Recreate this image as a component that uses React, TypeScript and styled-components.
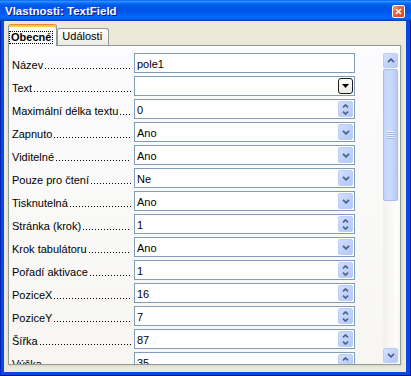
import React from "react";
import styled, { createGlobalStyle } from "styled-components";

type Control = "none" | "list" | "combo" | "spin";

interface Field {
  label: string;
  value: string;
  control: Control;
}

const fields: Field[] = [
  { label: "Název", value: "pole1", control: "none" },
  { label: "Text", value: "", control: "list" },
  { label: "Maximální délka textu", value: "0", control: "spin" },
  { label: "Zapnuto", value: "Ano", control: "combo" },
  { label: "Viditelné", value: "Ano", control: "combo" },
  { label: "Pouze pro čtení", value: "Ne", control: "combo" },
  { label: "Tisknutelná", value: "Ano", control: "combo" },
  { label: "Stránka (krok)", value: "1", control: "spin" },
  { label: "Krok tabulátoru", value: "Ano", control: "combo" },
  { label: "Pořadí aktivace", value: "1", control: "spin" },
  { label: "PoziceX", value: "16", control: "spin" },
  { label: "PoziceY", value: "7", control: "spin" },
  { label: "Šířka", value: "87", control: "spin" },
  { label: "Výška", value: "35", control: "spin" },
];

const GlobalStyle = createGlobalStyle`
  html, body {
    margin: 0;
    padding: 0;
    background: #ece9d8;
  }
  body {
    font-family: "Liberation Sans", Arial, sans-serif;
    font-size: 11px;
    color: #000;
  }
  * {
    box-sizing: border-box;
  }
`;

export default function App() {
  return (
    <>
      <GlobalStyle />
      <Frame>
        <TitleBar>
          <Title>Vlastnosti: TextField</Title>
          <CloseButton>
            <svg width="7" height="7" viewBox="0 0 7 7">
              <path d="M1 1L6 6M6 1L1 6" stroke="#fff" strokeWidth="1.6" />
            </svg>
          </CloseButton>
        </TitleBar>
        <Body>
          <TabStrip>
            <Tab $active>
              <FocusLabel>Obecné</FocusLabel>
            </Tab>
            <Tab>Události</Tab>
          </TabStrip>
          <Panel>
            <Form>
              {fields.map((f) => (
                <FieldRow key={f.label}>
                  <Label>
                    <LabelText>{f.label}</LabelText>
                    <Leader />
                  </Label>
                  <InputBox>
                    <Value>{f.value}</Value>
                    {f.control === "list" && (
                      <ListButton>
                        <svg width="7" height="4" viewBox="0 0 7 4">
                          <path d="M0 0H7L3.5 4Z" fill="#000" />
                        </svg>
                      </ListButton>
                    )}
                    {f.control === "combo" && (
                      <ComboButton>
                        <Chevron dir="down" />
                      </ComboButton>
                    )}
                    {f.control === "spin" && (
                      <SpinButton>
                        <SmallChevron dir="up" />
                        <SmallChevron dir="down" />
                      </SpinButton>
                    )}
                  </InputBox>
                </FieldRow>
              ))}
            </Form>
            <ScrollBar>
              <ScrollButton>
                <Chevron dir="up" />
              </ScrollButton>
              <Track>
                <Thumb>
                  <Grip />
                </Thumb>
              </Track>
              <ScrollButton>
                <Chevron dir="down" />
              </ScrollButton>
            </ScrollBar>
          </Panel>
        </Body>
      </Frame>
    </>
  );
}

function Chevron({ dir }: { dir: "up" | "down" }) {
  return (
    <svg width="8" height="5" viewBox="0 0 8 5">
      <path
        d={dir === "down" ? "M1 0.8L4 3.8L7 0.8" : "M1 4.2L4 1.2L7 4.2"}
        stroke="#4d6185"
        strokeWidth="1.8"
        fill="none"
      />
    </svg>
  );
}

function SmallChevron({ dir }: { dir: "up" | "down" }) {
  return (
    <svg width="7" height="4" viewBox="0 0 7 4">
      <path
        d={dir === "down" ? "M1 0.6L3.5 3.1L6 0.6" : "M1 3.4L3.5 0.9L6 3.4"}
        stroke="#4d6185"
        strokeWidth="1.6"
        fill="none"
      />
    </svg>
  );
}

const Frame = styled.div`
  width: 411px;
  height: 376px;
  display: flex;
  flex-direction: column;
  background: #0a48e0;
  box-shadow: inset 1px 0 #0026b8, inset -1px 0 #00169c, inset 0 -1px #00138c;
  overflow: hidden;
`;

const TitleBar = styled.div`
  height: 21px;
  flex: none;
  display: flex;
  align-items: center;
  padding: 0 6px 0 5px;
  background: linear-gradient(
    180deg,
    #0058ee 0%,
    #3593ff 6%,
    #127dff 12%,
    #0262ee 20%,
    #0057e5 28%,
    #0055eb 56%,
    #005bf5 66%,
    #026afe 78%,
    #0062ef 88%,
    #0052d6 94%,
    #0040ab 100%
  );
`;

const Title = styled.span`
  flex: 1;
  color: #fff;
  font-family: "Liberation Sans", Arial, sans-serif;
  font-weight: bold;
  font-size: 11.5px;
  padding-top: 1px;
  text-shadow: 1px 1px #0f1089;
`;

const CloseButton = styled.div`
  width: 13px;
  height: 13px;
  margin-top: 1px;
  border: 1px solid #fff;
  border-radius: 2px;
  display: flex;
  align-items: center;
  justify-content: center;
  background: linear-gradient(135deg, #f3ab8f 0%, #e6683f 35%, #d8471c 100%);
`;

const Body = styled.div`
  flex: 1;
  margin: 0 5px 4px 4px;
  padding: 3px 5px 7px 4px;
  background: #ece9d8;
  display: flex;
  flex-direction: column;
`;

const TabStrip = styled.div`
  height: 21px;
  flex: none;
  display: flex;
  align-items: flex-end;
`;

const Tab = styled.div<{ $active?: boolean }>`
  position: relative;
  z-index: ${(p) => (p.$active ? 1 : 0)};
  height: ${(p) => (p.$active ? 22 : 17)}px;
  margin-bottom: ${(p) => (p.$active ? -1 : 0)}px;
  padding: ${(p) => (p.$active ? "6px 3px 0 0" : "1px 6px 0 4px")};
  line-height: 13px;
  border: 1px solid #919b9c;
  border-bottom: none;
  border-radius: 3px 3px 0 0;
  background: ${(p) =>
    p.$active ? "#fcfcfe" : "linear-gradient(180deg, #fefefe, #ecebe6)"};
  border-top-color: ${(p) => (p.$active ? "#e68b2c" : "#919b9c")};
  box-shadow: ${(p) => (p.$active ? "inset 0 2px #ffc73c" : "none")};
`;

const FocusLabel = styled.span`
  display: block;
  height: 13px;
  padding: 0 1px;
  border: 1px dotted #000;
  font-weight: bold;
  line-height: 11px;
`;

const Panel = styled.div`
  height: 320px;
  flex: none;
  display: flex;
  align-items: flex-start;
  padding: 7px 2px 0 3px;
  overflow: hidden;
  border: 1px solid #919b9c;
  background: linear-gradient(180deg, #fcfcfe, #f7f6f2);
  box-shadow: 1px 1px 2px rgba(208, 206, 191, 0.75);
`;

const Form = styled.div`
  width: 343px;
  flex: none;
  display: flex;
  flex-direction: column;
  gap: 3px;
`;

const FieldRow = styled.div`
  display: flex;
  height: 20px;
  flex: none;
`;

const Label = styled.div`
  width: 122px;
  flex: none;
  display: flex;
  align-items: flex-start;
  padding-right: 3px;
`;

const LabelText = styled.span`
  flex: none;
  white-space: nowrap;
  line-height: 20px;
  padding-top: 2px;
`;

/* dotted leader between the label and its field */
const Leader = styled.span`
  flex: 1;
  height: 1px;
  margin: 15px 0 0 2px;
  background-image: linear-gradient(90deg, #000 1px, transparent 1px);
  background-size: 3px 1px;
  background-repeat: repeat-x;
`;

const InputBox = styled.div`
  flex: 1;
  display: flex;
  align-items: center;
  border: 1px solid #7f9db9;
  background: #fff;
  padding-left: 2px;
`;

const Value = styled.span`
  flex: 1;
  line-height: 18px;
  padding-top: 2px;
`;

const ComboButton = styled.div`
  width: 15px;
  height: 16px;
  margin-right: 1px;
  display: flex;
  align-items: center;
  justify-content: center;
  border: 1px solid #bccdf5;
  border-radius: 2px;
  background: linear-gradient(135deg, #d3e0fd 0%, #c1d3fb 50%, #b3c8f7 100%);
`;

const SpinButton = styled(ComboButton)`
  flex-direction: column;
  gap: 3px;
`;

const ListButton = styled.div`
  width: 15px;
  height: 16px;
  margin-right: 1px;
  display: flex;
  align-items: center;
  justify-content: center;
  border: 1px solid #1e1e1e;
  border-radius: 3px;
  background: linear-gradient(180deg, #ffffff, #ebe9e1);
`;

const ScrollBar = styled.div`
  width: 15px;
  height: 310px;
  flex: none;
  margin-left: 28px;
  display: flex;
  flex-direction: column;
  background: linear-gradient(90deg, #f3f1ec, #fefefb);
`;

const ScrollButton = styled.div`
  height: 15px;
  flex: none;
  display: flex;
  align-items: center;
  justify-content: center;
  border: 1px solid #bccdf5;
  border-radius: 2px;
  background: linear-gradient(135deg, #d6e2fd 0%, #c4d5fb 50%, #b4c8f7 100%);
`;

const Track = styled.div`
  flex: 1;
  padding-top: 1px;
`;

const Thumb = styled.div`
  height: 132px;
  display: flex;
  align-items: center;
  justify-content: center;
  border: 1px solid #a9bdf0;
  border-radius: 2px;
  background: linear-gradient(90deg, #c2d3fb, #cddbfc 40%, #c4d5fb 70%, #b5c9f7);
`;

const Grip = styled.div`
  width: 7px;
  height: 8px;
  background: repeating-linear-gradient(
    180deg,
    #eef3fe 0px,
    #eef3fe 1px,
    #9db6f2 1px,
    #9db6f2 2px
  );
`;
